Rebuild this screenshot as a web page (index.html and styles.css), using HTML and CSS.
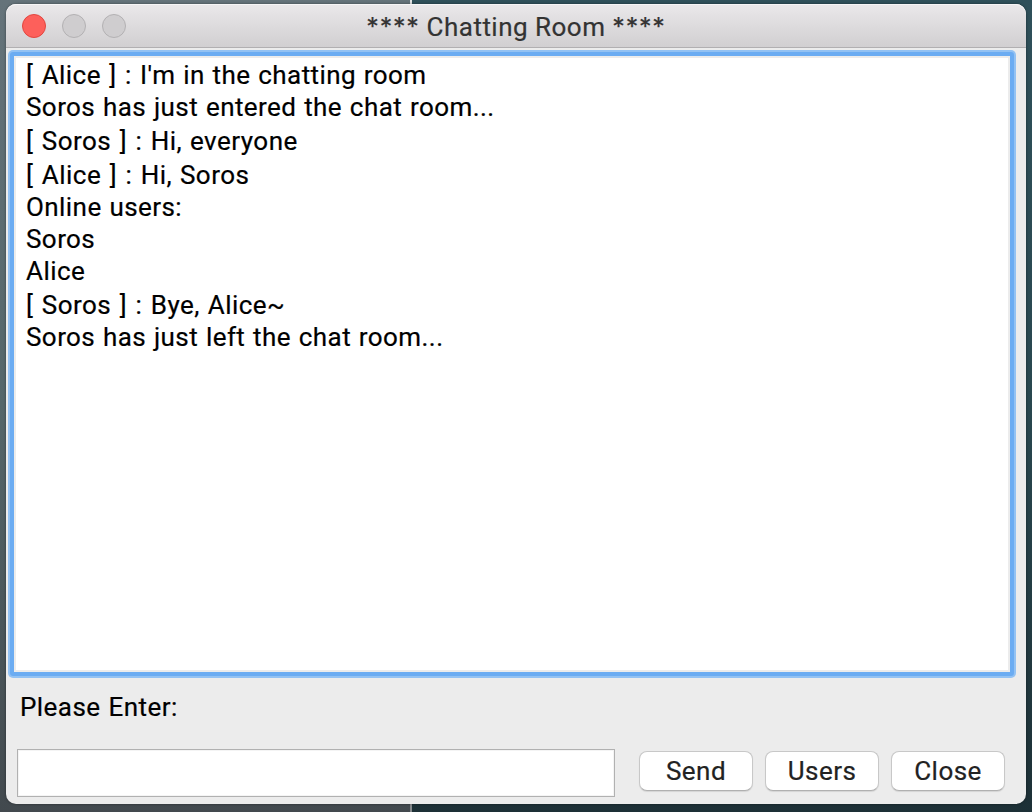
FILE: index.html
```html
<!DOCTYPE html>
<html lang="en">
<head>
<meta charset="utf-8">
<title>Chatting Room</title>
<link rel="stylesheet" href="styles.css">
</head>
<body>
<div class="desktop">
  <div class="window">
    <header class="titlebar">
      <div class="lights"><span class="light light-close"></span><span class="light"></span><span class="light"></span></div>
      <h1 class="title"><span class="stars">****</span> Chatting Room <span class="stars">****</span></h1>
    </header>
    <main class="log">
      <div class="log-inner">
        <p class="line"><span class="sender">[ Alice ] : </span>I'm in the chatting room</p>
        <p class="line">Soros has just entered the chat room...</p>
        <p class="line message"><span class="sender">[ Soros ] : </span>Hi, everyone</p>
        <p class="line message"><span class="sender">[ Alice ] : </span>Hi, Soros</p>
        <p class="line">Online users:</p>
        <p class="line">Soros</p>
        <p class="line">Alice</p>
        <p class="line message"><span class="sender">[ Soros ] : </span>Bye, Alice~</p>
        <p class="line">Soros has just left the chat room...</p>
      </div>
    </main>
    <label class="prompt" for="entry">Please Enter:</label>
    <div class="controls">
      <input class="entry" id="entry" type="text">
      <button class="button">Send</button>
      <button class="button">Users</button>
      <button class="button">Close</button>
    </div>
  </div>
</div>
</body>
</html>
```
FILE: styles.css
```css
* { box-sizing: border-box; }
body { margin: 0; font-family: Roboto, "Liberation Sans", sans-serif; font-size: 26px; color: #000; }
.desktop {
  width: 1032px;
  height: 812px;
  padding: 4px 6px 8px;
  overflow: hidden;
  background:
    linear-gradient(#e3e5e6, #85898c) 410px 0 / 2px 100% no-repeat,
    linear-gradient(#65737a, #55676a 50%, #42494e) 0 0 / 410px 100% no-repeat,
    linear-gradient(#2f505a, #29474f 50%, #1d3036);
}
.window {
  height: 800px;
  display: flex;
  flex-direction: column;
  background: #ececec;
  border-radius: 10px;
  box-shadow: 0 0 3px rgba(0, 0, 0, .4);
}
.titlebar {
  height: 44px;
  flex: none;
  display: grid;
  grid-template-columns: 120px 1fr 120px;
  align-items: center;
  padding: 0 16px;
  border-bottom: 1px solid #b1afb1;
  border-radius: 10px 10px 0 0;
  background: linear-gradient(#eae8ea, #d1cfd1);
  box-shadow: inset 0 1px #f6f5f6;
}
.lights { display: flex; gap: 16px; }
.light { width: 24px; height: 24px; border: 1px solid #b3b1b3; border-radius: 50%; background: #cfcdcf; }
.light-close { border-color: #e2463f; background: #fd605b; }
.title { margin: 0; font-size: 26px; font-weight: 400; line-height: 32px; letter-spacing: .48px; text-align: center; color: #333; white-space: nowrap; padding-top: 3px; -webkit-text-stroke: .2px; }
.stars { font-family: Inter, sans-serif; font-size: 25px; letter-spacing: .8px; }
.log { width: 1008px; height: 628px; flex: none; margin: 2px 0 0 2px; padding: 2px; border-radius: 5px; background: #93c2f3; }
.log-inner { height: 100%; border: 4px solid #6bacf2; border-radius: 3px; background: #fff; box-shadow: inset 0 0 0 2px #ececec; padding: 3px 12px; }
.line { margin: 0; line-height: 32px; letter-spacing: .43px; word-spacing: .9px; white-space: pre; -webkit-text-stroke: .2px; }
.sender { word-spacing: 1.5px; }
.message { padding-top: 2px; letter-spacing: .48px; }
.prompt { margin: 13px 0 0 14px; line-height: 32px; letter-spacing: .45px; word-spacing: 1px; -webkit-text-stroke: .2px; }
.controls { display: flex; align-items: center; margin: 26px 0 0 11px; height: 48px; gap: 12px; }
.entry { width: 598px; height: 48px; margin-right: 12px; padding: 0 8px; border: 1px solid #b1b1b1; border-radius: 0; outline: none; background: #fff; box-shadow: inset 0 0 0 1px #f4f4f4; font: inherit; }
.button { width: 114px; height: 40px; margin-bottom: 4px; padding: 0 0 1px; border: 1px solid #c8c8c8; border-bottom-color: #b0b0b0; border-radius: 8px; background: #fff; box-shadow: 0 1px 1px rgba(0, 0, 0, .1); font: inherit; letter-spacing: .45px; color: #222; -webkit-text-stroke: .2px; }
```
